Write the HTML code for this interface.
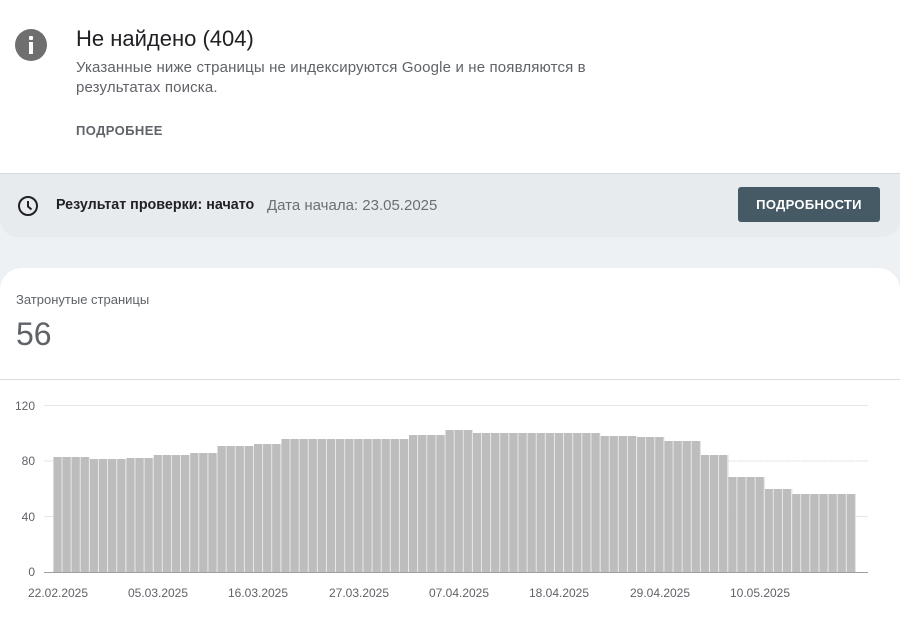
<!DOCTYPE html>
<html><head><meta charset="utf-8"><style>
body{margin:0;width:900px;height:618px;overflow:hidden;background:#eef1f4;font-family:"Liberation Sans",Roboto,sans-serif;position:relative}
.top{position:absolute;left:0;top:0;width:900px;height:173px;background:#fff;border-bottom:1px solid #d6d9dc}
.ic{position:absolute;left:15px;top:29px;width:32px;height:32px;border-radius:50%;background:#6f6f6f}
.ic:before{content:"";position:absolute;left:14px;top:7px;width:4px;height:4px;background:#fff;border-radius:1px}
.ic:after{content:"";position:absolute;left:14px;top:13px;width:4px;height:12px;background:#fff}
h1{position:absolute;left:76px;top:26px;margin:0;font-weight:normal;font-size:22px;color:#202124}
.desc{position:absolute;left:76px;top:58px;font-size:15px;line-height:20px;color:#5f6368;width:560px;letter-spacing:.15px}
.more{position:absolute;left:76px;top:123px;font-size:13px;font-weight:bold;color:#5f6368;letter-spacing:.4px}
.band{position:absolute;left:0;top:174px;width:900px;height:63px;background:#e8ebee;border-bottom-left-radius:18px;border-bottom-right-radius:18px}
.band .t{position:absolute;left:56px;top:23px;font-size:14.3px;font-weight:bold;color:#202124}
.band .d{position:absolute;left:267px;top:23px;font-size:15px;color:#6b6f73}
.btn{position:absolute;left:738px;top:13px;width:142px;height:35px;background:#455a64;border-radius:3px;color:#fff;font-size:13px;font-weight:bold;text-align:center;line-height:35px;letter-spacing:.3px}
.card{position:absolute;left:0;top:268px;width:900px;height:360px;background:#fff;border-radius:22px 22px 0 0}
.lab{position:absolute;left:16px;top:292px;font-size:13px;color:#5f6368}
.num{position:absolute;left:16px;top:316px;font-size:32px;color:#5f6368}
.hr{position:absolute;left:0;top:379px;width:900px;height:1px;background:#dadce0}
</style></head><body>
<div class="top">
<div class="ic"></div>
<h1>Не найдено (404)</h1>
<div class="desc">Указанные ниже страницы не индексируются Google и не появляются в<br>результатах поиска.</div>
<div class="more">ПОДРОБНЕЕ</div>
</div>
<div class="band">
<svg style="position:absolute;left:16px;top:20px" width="24" height="24" viewBox="0 0 24 24"><circle cx="12" cy="12" r="9" fill="none" stroke="#202124" stroke-width="2"/><path d="M12 7v5.5l3.5 3" fill="none" stroke="#202124" stroke-width="2"/></svg>
<div class="t">Результат проверки: начато</div>
<div class="d">Дата начала: 23.05.2025</div>
<div class="btn">ПОДРОБНОСТИ</div>
</div>
<div class="card"></div>
<div class="lab">Затронутые страницы</div>
<div class="num">56</div>
<div class="hr"></div>
<svg style="position:absolute;left:0;top:380px" width="900" height="238" viewBox="0 380 900 238">
<defs><pattern id="g" x="53.3" y="0" width="9.12" height="10" patternUnits="userSpaceOnUse"><rect x="8.32" y="0" width="0.9" height="10" fill="#fff" fill-opacity=".8"/></pattern></defs>
<g stroke="#e6e6e6" stroke-width="1"><line x1="44" y1="405.5" x2="868" y2="405.5"/><line x1="44" y1="461" x2="868" y2="461"/><line x1="44" y1="516.5" x2="868" y2="516.5"/></g>
<g fill="#bdbdbd">
<rect x="53.3" y="457" width="36.5" height="115"/>
<rect x="89.8" y="459" width="36.5" height="113"/>
<rect x="126.3" y="458" width="27.4" height="114"/>
<rect x="153.6" y="455" width="36.5" height="117"/>
<rect x="190.1" y="453" width="27.4" height="119"/>
<rect x="217.5" y="446" width="36.5" height="126"/>
<rect x="254.0" y="444" width="27.4" height="128"/>
<rect x="281.3" y="439" width="127.7" height="133"/>
<rect x="409.0" y="435" width="36.5" height="137"/>
<rect x="445.5" y="430" width="27.4" height="142"/>
<rect x="472.9" y="433" width="127.7" height="139"/>
<rect x="600.6" y="436" width="36.5" height="136"/>
<rect x="637.1" y="437" width="27.4" height="135"/>
<rect x="664.5" y="441" width="36.5" height="131"/>
<rect x="701.0" y="455" width="27.4" height="117"/>
<rect x="728.3" y="477" width="36.5" height="95"/>
<rect x="764.8" y="489" width="27.4" height="83"/>
<rect x="792.2" y="494" width="63.8" height="78"/>
</g>
<rect x="53" y="420" width="804" height="152" fill="url(#g)"/>
<line x1="44" y1="572.5" x2="868" y2="572.5" stroke="#9e9e9e"/>
<g font-family="Liberation Sans, sans-serif" font-size="12" fill="#5f6368">
<text x="35" y="410" text-anchor="end">120</text>
<text x="35" y="465" text-anchor="end">80</text>
<text x="35" y="521" text-anchor="end">40</text>
<text x="35" y="576" text-anchor="end">0</text>
<g text-anchor="middle">
<text x="58" y="597">22.02.2025</text>
<text x="158" y="597">05.03.2025</text>
<text x="258" y="597">16.03.2025</text>
<text x="359" y="597">27.03.2025</text>
<text x="459" y="597">07.04.2025</text>
<text x="559" y="597">18.04.2025</text>
<text x="660" y="597">29.04.2025</text>
<text x="760" y="597">10.05.2025</text>
</g></g>
</svg>
</body></html>
